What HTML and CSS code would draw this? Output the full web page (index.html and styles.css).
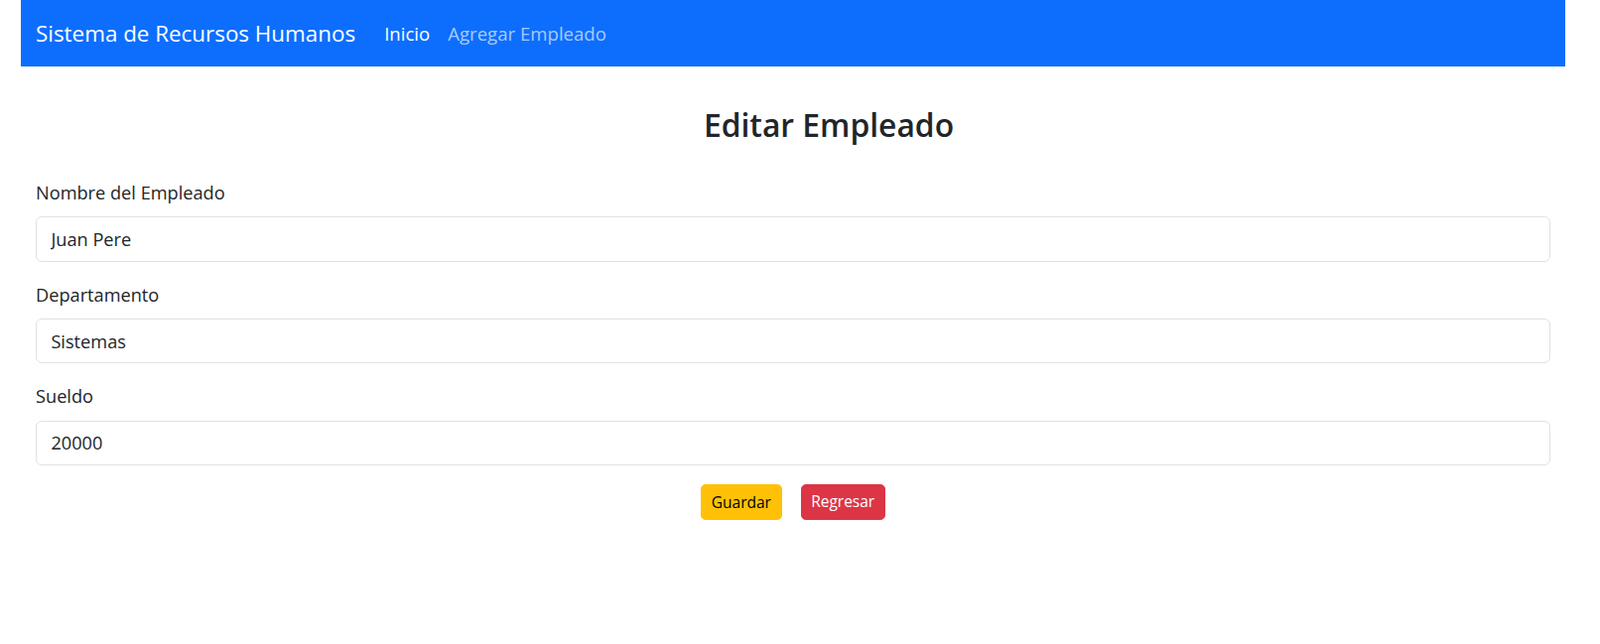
FILE: index.html
```html
<!DOCTYPE html>
<html lang="es">
<head>
<meta charset="utf-8">
<title>Sistema de Recursos Humanos</title>
<link rel="stylesheet" href="styles.css">
</head>
<body>
<div class="page">
  <nav class="navbar">
    <a class="brand" href="#">Sistema de Recursos Humanos</a>
    <ul class="nav-links">
      <li><a class="nav-link active" href="#">Inicio</a></li>
      <li><a class="nav-link" href="#">Agregar Empleado</a></li>
    </ul>
  </nav>
  <main class="content">
    <h3 class="title">Editar Empleado</h3>
    <form class="form">
      <div class="field">
        <label class="label" for="nombre">Nombre del Empleado</label>
        <input class="input" id="nombre" type="text" value="Juan Pere">
      </div>
      <div class="field">
        <label class="label" for="depto">Departamento</label>
        <input class="input" id="depto" type="text" value="Sistemas">
      </div>
      <div class="field">
        <label class="label" for="sueldo">Sueldo</label>
        <input class="input" id="sueldo" type="number" value="20000">
      </div>
      <div class="actions">
        <button class="btn btn-warning" type="button">Guardar</button>
        <a class="btn btn-danger" href="#">Regresar</a>
      </div>
    </form>
  </main>
</div>
</body>
</html>
```

FILE: styles.css
```css
* { box-sizing: border-box; }

html, body {
  margin: 0;
  padding: 0;
  background: #fff;
}

body {
  font-family: "Open Sans", "Noto Sans", "Liberation Sans", sans-serif;
  color: #212529;
  font-size: 18.2px;
  line-height: 1.5;
}

.page {
  margin: 0 35px 0 21px;
}

.navbar {
  height: 67px;
  background: #0d6efd;
  display: flex;
  align-items: center;
  padding: 1px 15px 0;
}

.brand {
  color: #fff;
  text-decoration: none;
  font-size: 22.4px;
  margin-right: 20px;
  white-space: nowrap;
}

.nav-links {
  list-style: none;
  margin: 0;
  padding: 0;
  display: flex;
}

.nav-link {
  display: block;
  color: rgba(255, 255, 255, 0.65);
  text-decoration: none;
  font-size: 18.6px;
  padding: 0 9px;
}

.nav-link.active {
  color: #fff;
}

.content {
  padding: 0 15px;
}

.title {
  margin: 41px 0 36px;
  padding-left: 72px;
  text-align: center;
  font-size: 31.8px;
  font-weight: 600;
  line-height: 36px;
}

.field {
  margin-bottom: 18.8px;
}

.label {
  display: block;
  line-height: 28.8px;
  margin-bottom: 9.6px;
}

.input {
  display: block;
  width: 100%;
  height: 45.4px;
  padding: 0 14.4px;
  font: inherit;
  color: #212529;
  background: #fff;
  border: 1px solid #dee2e6;
  border-radius: 6px;
  outline: none;
  -moz-appearance: textfield;
}

.input::-webkit-outer-spin-button,
.input::-webkit-inner-spin-button {
  -webkit-appearance: none;
  margin: 0;
}

.actions {
  display: flex;
  justify-content: center;
  gap: 19px;
}

.btn {
  display: inline-flex;
  align-items: center;
  justify-content: center;
  height: 36px;
  padding: 0 9.6px;
  font-family: inherit;
  font-size: 15.5px;
  border: 1px solid transparent;
  border-radius: 4.8px;
  text-decoration: none;
  cursor: pointer;
}

.btn-warning {
  background: #ffc107;
  border-color: #ffc107;
  color: #000;
}

.btn-danger {
  background: #dc3545;
  border-color: #dc3545;
  color: #fff;
}
```
